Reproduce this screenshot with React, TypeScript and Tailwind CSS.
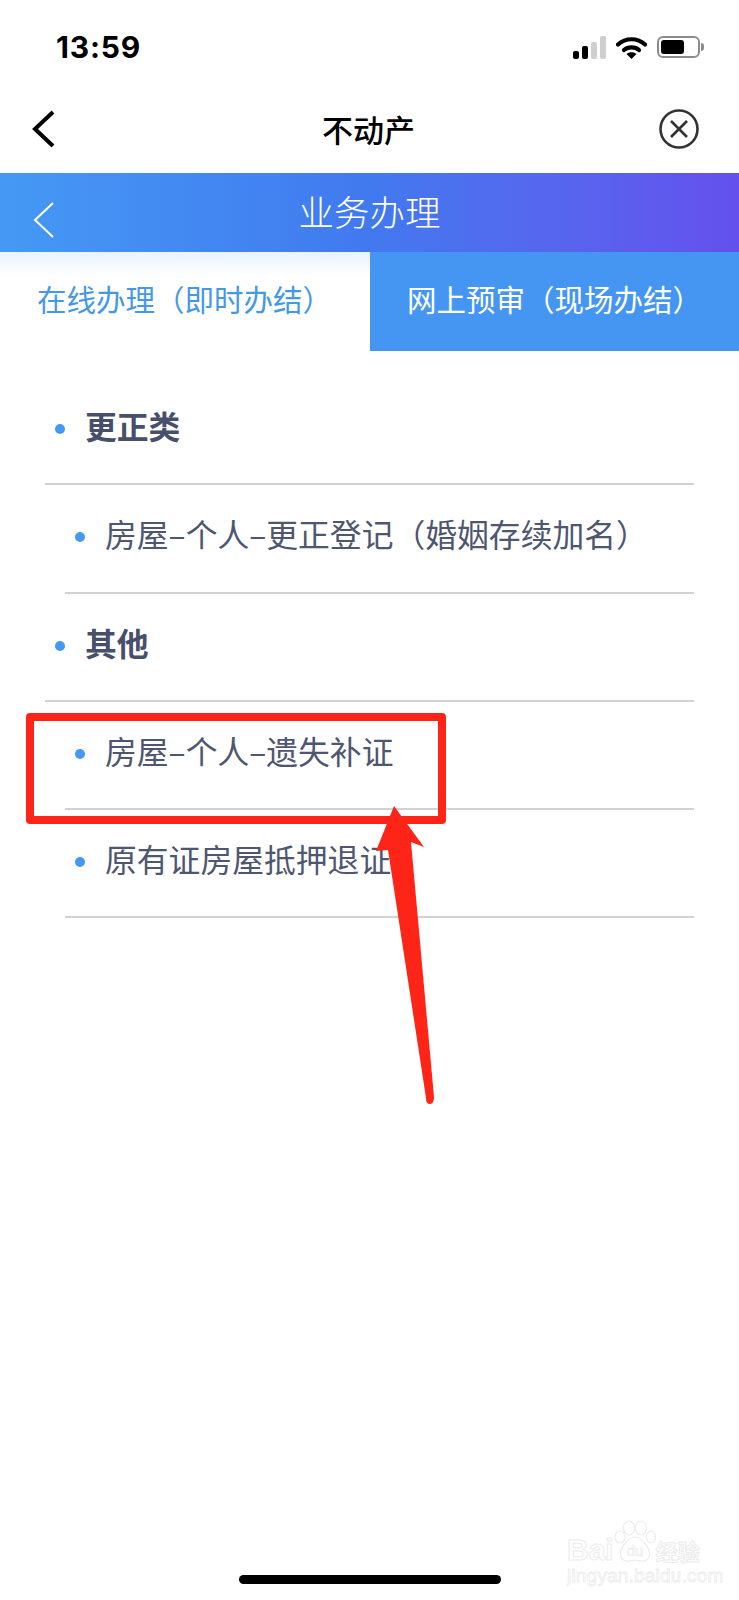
const CJK = 'font-["Noto_Sans_CJK_SC","Noto_Sans",sans-serif]';

function StatusIcons() {
  return (
    <div className="flex items-center">
      <svg width="33" height="23" viewBox="0 0 33 23" className="mr-[10px]">
        <rect x="0" y="15" width="6" height="8" rx="2" fill="#000" />
        <rect x="9" y="10" width="6" height="13" rx="2" fill="#000" />
        <rect x="18" y="6" width="6" height="17" rx="2" fill="#cfcfcf" />
        <rect x="27" y="0" width="6" height="23" rx="2" fill="#cfcfcf" />
      </svg>
      <svg width="31" height="23" viewBox="0 0 31 23" className="mr-[10px]">
        <path d="M2 8.5 C9.5 1.5 21.5 1.5 29 8.5" fill="none" stroke="#000" strokeWidth="4.2" strokeLinecap="round" />
        <path d="M8 14 C12 10.5 19 10.5 23 14" fill="none" stroke="#000" strokeWidth="4.2" strokeLinecap="round" />
        <path d="M15.5 23 L10.5 18 C13 15.8 18 15.8 20.5 18 Z" fill="#000" />
      </svg>
      <div className="flex items-center">
        <div className="flex h-[22px] w-[43px] items-center rounded-[6px] border-2 border-[#8c8c8c] p-[2px]">
          <div className="h-full w-[23px] rounded-[3px] bg-black" />
        </div>
        <div className="ml-[1px] h-[8px] w-[3px] rounded-r-full bg-[#8c8c8c]" />
      </div>
    </div>
  );
}

function BackIcon({ color, width }: { color: string; width: number }) {
  return (
    <svg width="24" height="38" viewBox="0 0 24 38" fill="none">
      <path d="M21 2 L3 19 L21 36" stroke={color} strokeWidth={width} />
    </svg>
  );
}

function Row({ text, sub }: { text: string; sub?: boolean }) {
  return (
    <div className={`flex h-[108.25px] items-center border-b-2 border-[#d2d2d2] pb-[2px] pl-[10px] ${sub ? 'ml-[20px]' : ''}`}>
      <span className="h-[10px] w-[10px] shrink-0 rounded-full bg-[#4598f3]" />
      <span className={`mb-[6px] ml-[20px] text-[31.8px] leading-none whitespace-nowrap ${sub ? 'text-[#4e5670]' : 'font-bold text-[#474f6b]'}`}>{text}</span>
    </div>
  );
}

function Watermark() {
  return (
    <div className="absolute left-[567px] top-[1520px] w-[134px] text-white">
      <div className="flex h-[43px] items-end">
        <span className="font-['Liberation_Sans',sans-serif] text-[30px] leading-[26px] font-bold [-webkit-text-stroke:1px_#ececec]">Bai</span>
        <svg width="42" height="43" viewBox="0 0 42 43" fill="#fff" stroke="#ececec" strokeWidth="1.2" className="shrink-0">
          <ellipse cx="15" cy="8" rx="5.5" ry="7" />
          <ellipse cx="27" cy="8" rx="5.5" ry="7" />
          <ellipse cx="6" cy="17" rx="5" ry="6" />
          <ellipse cx="37" cy="17" rx="4.5" ry="6" />
          <path d="M21 17 C28 17 38 30 35 37 C32 43 26 41 21 40 C16 41 10 43 7 37 C4 30 14 17 21 17 Z" />
          <text x="21" y="36" textAnchor="middle" fontSize="15" fontFamily="Liberation Sans" strokeWidth="0.7">du</text>
        </svg>
        <span className={`${CJK} text-[22px] leading-[26px] font-bold [-webkit-text-stroke:1px_#ececec]`}>经验</span>
      </div>
      <div className="mt-[3px] font-['Liberation_Sans',sans-serif] text-[19px] leading-[20px] tracking-[0.2px] whitespace-nowrap [-webkit-text-stroke:0.8px_#ececec]">
        jingyan.baidu.com
      </div>
    </div>
  );
}

export default function App() {
  return (
    <div className={`${CJK} relative flex h-[1600px] w-[739px] flex-col overflow-hidden bg-white`}>
      {/* status bar */}
      <div className="flex h-[84px] shrink-0 items-center justify-between pt-[10px] pr-[35px] pl-[56px]">
        <span className="font-['Inter',sans-serif] text-[30px] leading-none font-bold tracking-[0.8px] text-black">13:59</span>
        <StatusIcons />
      </div>

      {/* app nav */}
      <div className="flex h-[89px] shrink-0 items-center justify-between pr-[40px] pl-[32px]">
        <div className="w-[46px]">
          <BackIcon color="#000" width={4} />
        </div>
        <span className="text-[31px] leading-none font-medium text-black">不动产</span>
        <svg width="40" height="40" viewBox="0 0 40 40" fill="none" stroke="#333" strokeWidth="2.6">
          <circle cx="20" cy="20" r="18.5" />
          <path d="M12 12 L28 28 M28 12 L12 28" />
        </svg>
      </div>

      {/* page header */}
      <div className="relative flex h-[79px] shrink-0 items-center justify-center bg-gradient-to-r from-[#4599f4] via-[#4179ef] via-50% to-[#6450ed]">
        <div className="absolute left-[32px] top-[28px]">
          <BackIcon color="#fff" width={2} />
        </div>
        <span className="mb-[4px] text-[35.5px] leading-none font-light text-white">业务办理</span>
      </div>

      {/* tabs */}
      <div className="flex h-[99px] shrink-0">
        <div className="flex w-[370px] bg-gradient-to-b from-[#e9f3fc] to-white to-[26%] pl-[37px]">
          <span className="my-auto pb-[6px] text-[29.5px] leading-none whitespace-nowrap text-[#4598e6]">在线办理（即时办结）</span>
        </div>
        <div className="flex flex-1 bg-[#4596f3] pl-[37px]">
          <span className="my-auto pb-[6px] text-[29.5px] leading-none whitespace-nowrap text-white">网上预审（现场办结）</span>
        </div>
      </div>

      {/* list */}
      <div className="mx-[45px] pt-[26px]">
        <Row text="更正类" />
        <Row text="房屋–个人–更正登记（婚姻存续加名）" sub />
        <Row text="其他" />
        <Row text="房屋–个人–遗失补证" sub />
        <Row text="原有证房屋抵押退证" sub />
      </div>

      <div className="mx-auto mt-auto mb-[16px] h-[9px] w-[262px] rounded-full bg-black" />

      <Watermark />

      {/* red annotation */}
      <div className="absolute left-[26px] top-[713px] h-[111px] w-[420px] rounded-[4px] border-[8px] border-[#fe2518]" />
      <svg width="739" height="1600" viewBox="0 0 739 1600" className="pointer-events-none absolute left-0 top-0">
        <path
          d="M394 806 L424 847 L411 842 L434 1097 Q434 1104 430 1104 Q426 1104 426 1098 L388 850 L376 851 Z"
          fill="#fe2518"
        />
      </svg>
    </div>
  );
}
